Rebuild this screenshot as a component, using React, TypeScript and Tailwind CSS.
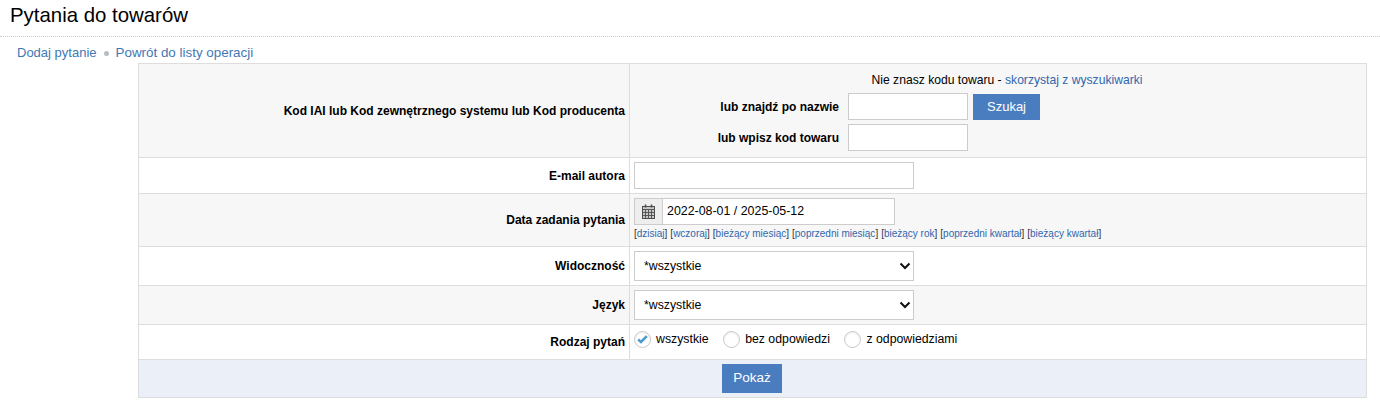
import React from "react";

const font = "font-['Liberation_Sans',Arial,sans-serif]";
const inputCls = "h-[27px] border border-[#cccccc] bg-white block";

function Row({ label, shaded, h, children }: { label: string; shaded?: boolean; h: string; children: React.ReactNode }) {
  return (
    <div className={`flex border-b border-[#dddddd] ${h} ${shaded ? "bg-[#f7f7f7]" : "bg-white"}`}>
      <div className="w-[491px] shrink-0 flex items-center justify-end pr-[4px] font-bold text-[12px] text-black border-r border-[#dddddd]">
        {label}
      </div>
      <div className="flex-1 px-[4px] min-w-0">{children}</div>
    </div>
  );
}

function Select() {
  return (
    <div className="h-[30px] w-[280px] border border-[#cccccc] bg-white flex items-center justify-between pl-[9px] pr-[2px] text-[12.3px] text-black">
      <span>*wszystkie</span>
      <svg width="12" height="8" viewBox="0 0 12 8" fill="none" stroke="#111" strokeWidth="2">
        <path d="M1.5 1.5 L6 6 L10.5 1.5" />
      </svg>
    </div>
  );
}

function Radio({ checked, label }: { checked?: boolean; label: string }) {
  return (
    <span className="flex items-center gap-[5px]">
      <span className="w-[17px] h-[17px] rounded-full border border-[#c8c8c8] bg-white flex items-center justify-center shadow-[inset_0_1px_2px_rgba(0,0,0,0.08)]">
        {checked && (
          <svg width="11" height="9" viewBox="0 0 11 9" fill="none" stroke="#4a9bd0" strokeWidth="2.6">
            <path d="M1.2 4.5 L4 7 L9.8 1.2" />
          </svg>
        )}
      </span>
      <span>{label}</span>
    </span>
  );
}

const quick = ["dzisiaj", "wczoraj", "bieżący miesiąc", "poprzedni miesiąc", "bieżący rok", "poprzedni kwartał", "bieżący kwartał"];

export default function App() {
  return (
    <div className={`${font} w-[1380px] h-[410px] bg-white overflow-hidden text-black`}>
      <h1 className="text-[20.4px] leading-[23px] font-normal pl-[10px] pt-[4px] h-[37px] border-b border-dotted border-[#cccccc]">
        Pytania do towarów
      </h1>
      <div className="flex items-center pl-[17px] h-[26px] pt-[6px] text-[13px] text-[#3f78b5]">
        <a>Dodaj pytanie</a>
        <span className="w-[5px] h-[5px] rounded-full bg-[#b8bcc4] mx-[7px]" />
        <a className="text-[13.4px]">Powrót do listy operacji</a>
      </div>
      <div className="ml-[138px] w-[1229px] border border-[#dddddd]">
        <Row label="Kod IAI lub Kod zewnętrznego systemu lub Kod producenta" shaded h="h-[94px]">
          <div className="pt-[9px] text-[12px]">
            <div className="text-center leading-[14px] pl-[18px] text-[12.14px]">
              Nie znasz kodu towaru - <a className="text-[#2f66ad]">skorzystaj z wyszukiwarki</a>
            </div>
            <div className="flex items-center mt-[6px]">
              <span className="w-[205px] text-right font-bold">lub znajdź po nazwie</span>
              <span className={`${inputCls} w-[120px] ml-[9px]`} />
              <button className="ml-[5px] w-[67px] h-[26px] bg-[#4a7dc0] text-white text-[13px]">Szukaj</button>
            </div>
            <div className="flex items-center mt-[4px]">
              <span className="w-[205px] text-right font-bold">lub wpisz kod towaru</span>
              <span className={`${inputCls} w-[120px] ml-[9px]`} />
            </div>
          </div>
        </Row>
        <Row label="E-mail autora" h="h-[36px]">
          <div className="pt-[4px]">
            <span className={`${inputCls} w-[280px]`} />
          </div>
        </Row>
        <Row label="Data zadania pytania" shaded h="h-[53px]">
          <div className="pt-[4px]">
            <div className="flex w-[261px] h-[27px] border border-[#cccccc] bg-white">
              <span className="w-[28px] bg-[#eeeeee] border-r border-[#cccccc] flex items-center justify-center">
                <svg width="13" height="15" viewBox="0 0 13 15" fill="none" stroke="#4d4d4d" strokeWidth="1">
                  <rect x="0.5" y="2.5" width="12" height="12" fill="#c8c8c8" />
                  <path d="M0.5 5.5H12.5M0.5 8.5H12.5M0.5 11.5H12.5M3.5 5.5V14.5M6.5 5.5V14.5M9.5 5.5V14.5" strokeWidth="0.9" />
                  <path d="M3.5 0.5V3.5M9.5 0.5V3.5" strokeWidth="1.6" />
                </svg>
              </span>
              <span className="pl-[4px] text-[12.4px] leading-[25px]">2022-08-01 / 2025-05-12</span>
            </div>
            <div className="text-[10px] leading-[12px] mt-[3px] flex gap-[3px] text-[#333333]">
              {quick.map((q) => (
                <span key={q}>
                  [<a className="text-[#2f66ad]">{q}</a>]
                </span>
              ))}
            </div>
          </div>
        </Row>
        <Row label="Widoczność" h="h-[39px]">
          <div className="pt-[4px]"><Select /></div>
        </Row>
        <Row label="Język" shaded h="h-[39px]">
          <div className="pt-[4px]"><Select /></div>
        </Row>
        <Row label="Rodzaj pytań" h="h-[35px]">
          <div className="flex items-center gap-[14.5px] h-[29px] text-[12.3px]">
            <Radio checked label="wszystkie" />
            <Radio label="bez odpowiedzi" />
            <Radio label="z odpowiedziami" />
          </div>
        </Row>
        <div className="h-[37px] bg-[#ebeff7] flex items-center justify-center pr-[1px]">
          <button className="w-[60px] h-[29px] bg-[#4a7dc0] text-white text-[13.5px]">Pokaż</button>
        </div>
      </div>
    </div>
  );
}
